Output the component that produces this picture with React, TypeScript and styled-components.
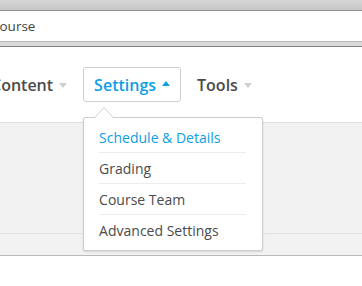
import React from 'react';
import styled, { createGlobalStyle } from 'styled-components';

const GlobalStyle = createGlobalStyle`
	html, body {
		margin: 0;
		padding: 0;
		background: #fff;
		overflow: hidden;
	}
	body {
		font-family: 'Open Sans', 'Liberation Sans', sans-serif;
	}
`;

const Page = styled.div`
	width: 362px;
	height: 286px;
	overflow: hidden;
	position: relative;
`;

const Chrome = styled.div`
	height: 10px;
	background: linear-gradient(#d6d6d6, #c6c6c6);
	border-bottom: 1px solid #8f8f8f;
`;

const Field = styled.div`
	height: 30px;
	display: flex;
	align-items: center;
	background: #fff;
	border-bottom: 1px solid #b8b8b8;
	font-size: 13.5px;
	color: #444;
	text-indent: -9px;
	white-space: nowrap;
`;

const FieldBand = styled.div`
	height: 4px;
	background: #dadada;
	border-bottom: 1px solid #7e7e7e;
`;

const Nav = styled.nav`
	height: 75px;
	display: flex;
	align-items: flex-start;
	gap: 15px;
	padding-top: 20px;
	margin-left: -10px;
	box-sizing: border-box;
`;

const NavItem = styled.div`
	position: relative;
`;

const NavButton = styled.div<{ $active?: boolean }>`
	display: flex;
	align-items: center;
	gap: 6px;
	height: 35px;
	box-sizing: border-box;
	padding: 0 ${(p) => (p.$active ? '10px' : '0')};
	border: 1px solid ${(p) => (p.$active ? '#cfcfcf' : 'transparent')};
	border-radius: 3px;
	font-size: 16px;
	font-weight: 600;
	color: ${(p) => (p.$active ? '#0d9ee4' : '#4b4b4b')};
	white-space: nowrap;
`;

const Caret = styled.span<{ $up?: boolean }>`
	width: 0;
	height: 0;
	border-left: 4.5px solid transparent;
	border-right: 4.5px solid transparent;
	${(p) =>
		p.$up
			? 'border-bottom: 5px solid #0d9ee4; margin-top: -2px;'
			: 'border-top: 5px solid #cfcfcf; margin-top: 2px;'}
`;

const Menu = styled.ul`
	position: absolute;
	top: 50px;
	left: 0;
	width: 180px;
	box-sizing: border-box;
	margin: 0;
	padding: 4px 16px 4px 15px;
	list-style: none;
	background: #fff;
	border: 1px solid #cdcdcd;
	border-radius: 2px;
	box-shadow: 0 1px 2px rgba(0, 0, 0, 0.12);
	z-index: 2;

	&::before,
	&::after {
		content: '';
		position: absolute;
		left: 10px;
		width: 0;
		height: 0;
		border-left: 10px solid transparent;
		border-right: 10px solid transparent;
	}
	&::before {
		top: -11px;
		border-bottom: 11px solid #cdcdcd;
	}
	&::after {
		top: -10px;
		border-bottom: 11px solid #fff;
	}
`;

const MenuItem = styled.li<{ $current?: boolean }>`
	height: 31px;
	box-sizing: border-box;
	display: flex;
	align-items: center;
	font-size: 14px;
	color: ${(p) => (p.$current ? '#0d9ee4' : '#4b4b4b')};
	border-bottom: 1px solid #ececec;
	white-space: nowrap;

	&:last-child {
		border-bottom: none;
	}
`;

const Band = styled.section`
	height: 134px;
	box-sizing: border-box;
	background: #f2f2f2;
	border-top: 1px solid #dedede;
	border-bottom: 1px solid #b9b9b9;
	display: flex;
	flex-direction: column;
	justify-content: flex-end;
`;

const BandFoot = styled.div`
	height: 21px;
	border-top: 1px solid #e2e2e2;
`;

const items = ['Schedule & Details', 'Grading', 'Course Team', 'Advanced Settings'];

export default function App() {
	return (
		<Page>
			<GlobalStyle />
			<Chrome />
			<Field>Course</Field>
			<FieldBand />
			<Nav>
				<NavItem>
					<NavButton>
						Content <Caret />
					</NavButton>
				</NavItem>
				<NavItem>
					<NavButton $active>
						Settings <Caret $up />
					</NavButton>
					<Menu>
						{items.map((item, i) => (
							<MenuItem key={item} $current={i === 0}>
								{item}
							</MenuItem>
						))}
					</Menu>
				</NavItem>
				<NavItem>
					<NavButton>
						Tools <Caret />
					</NavButton>
				</NavItem>
			</Nav>
			<Band>
				<BandFoot />
			</Band>
		</Page>
	);
}
